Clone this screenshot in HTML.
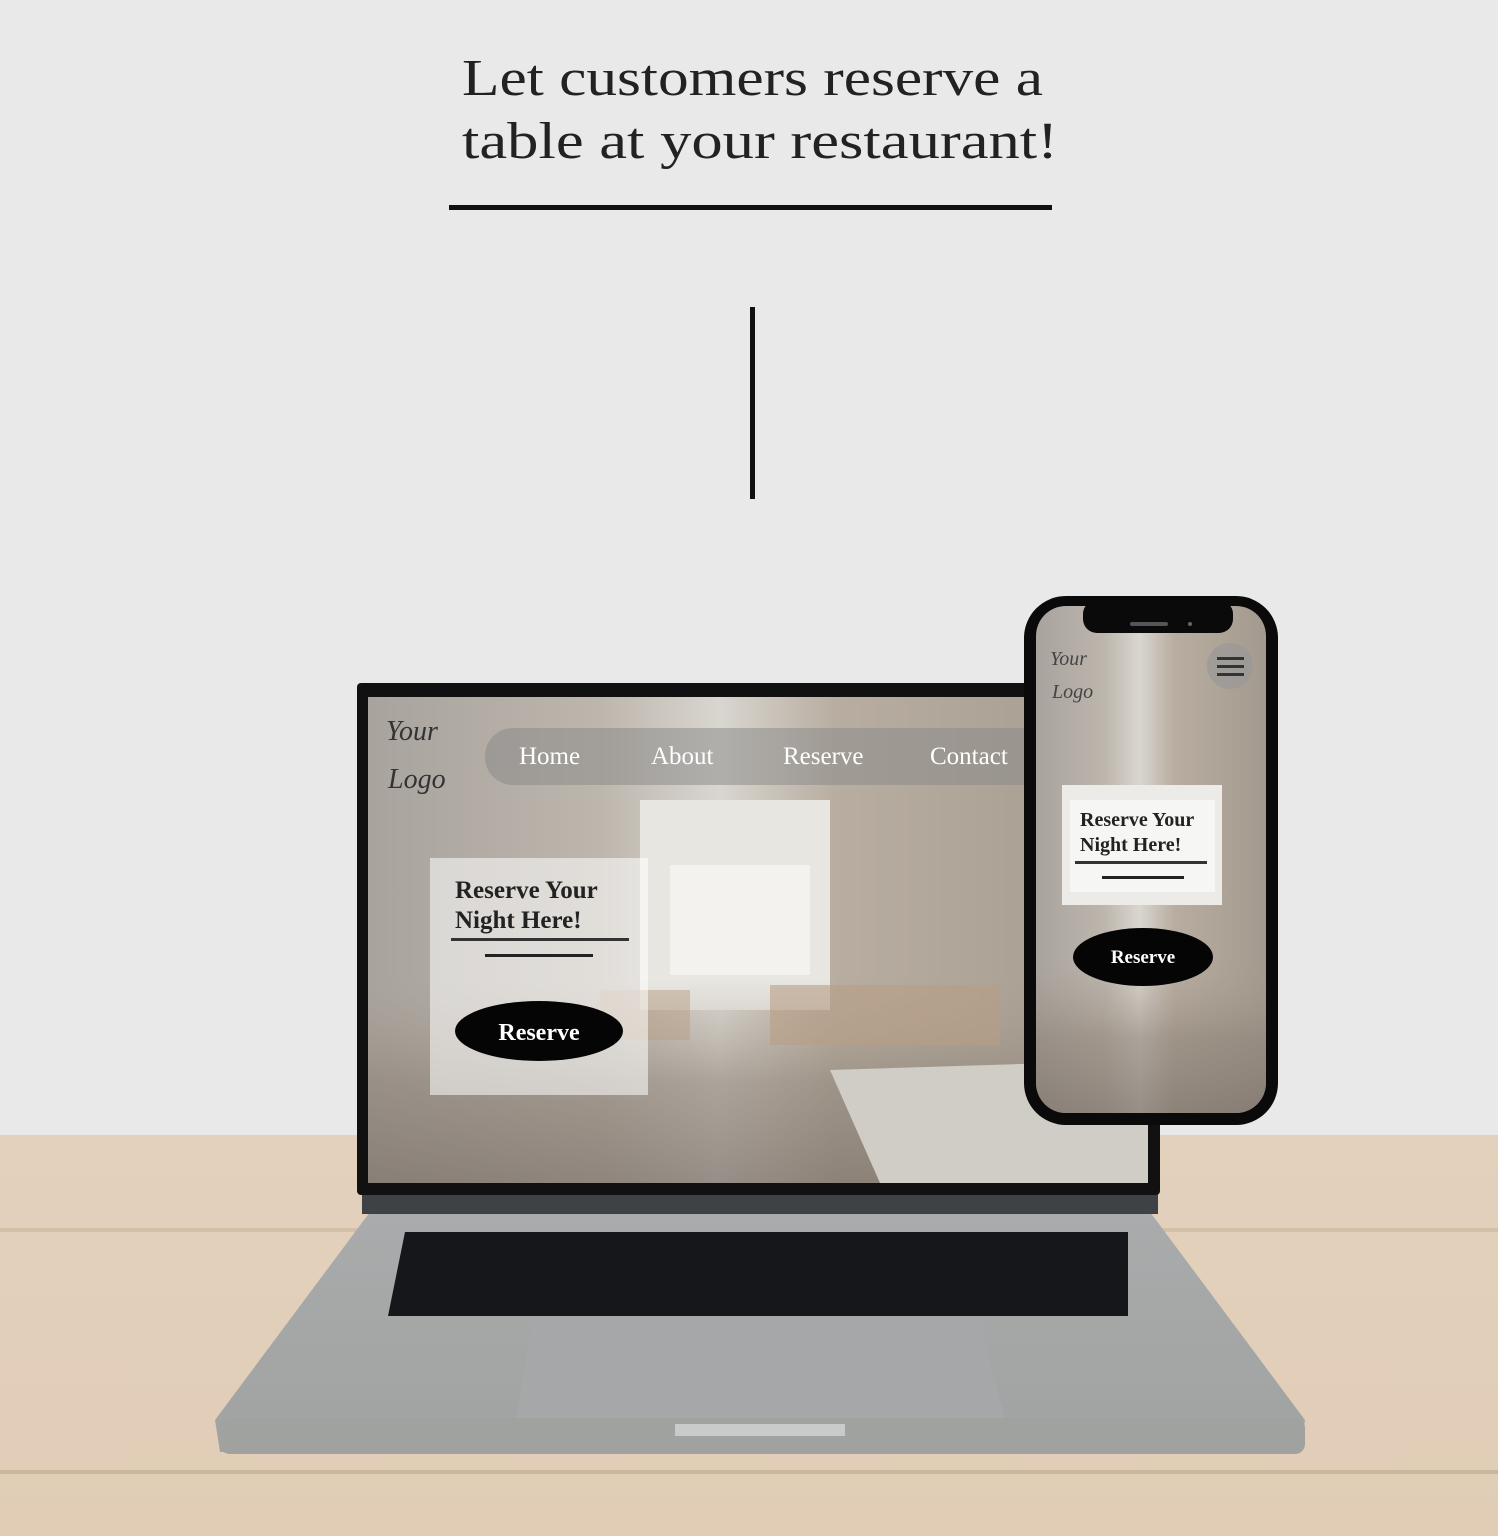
<!DOCTYPE html>
<html><head><meta charset="utf-8"><style>
html,body{margin:0;padding:0;width:1498px;height:1536px;overflow:hidden;background:#e9e9e9}
svg{display:block}
</style></head><body>
<svg width="1498" height="1536" viewBox="0 0 1498 1536" xmlns="http://www.w3.org/2000/svg">
<defs>
<linearGradient id="wood" x1="0" y1="0" x2="0" y2="1">
<stop offset="0" stop-color="#e3d1bd"/><stop offset="1" stop-color="#e1cdb6"/></linearGradient>
<linearGradient id="room" x1="0" y1="0" x2="1" y2="0">
<stop offset="0" stop-color="#a8a39d"/><stop offset="0.3" stop-color="#bdb6ad"/><stop offset="0.45" stop-color="#d9d6d0"/><stop offset="0.6" stop-color="#b8ada0"/><stop offset="1" stop-color="#a39a8f"/></linearGradient>
<linearGradient id="floor" x1="0" y1="0" x2="0" y2="1">
<stop offset="0" stop-color="#a89c8e" stop-opacity="0"/><stop offset="0.5" stop-color="#8e8378" stop-opacity="0.6"/><stop offset="1" stop-color="#7a7068" stop-opacity="0.7"/></linearGradient>
<linearGradient id="base" x1="0" y1="0" x2="0" y2="1">
<stop offset="0" stop-color="#a9abac"/><stop offset="1" stop-color="#a0a3a1"/></linearGradient>
<clipPath id="scr"><rect x="368" y="697" width="780" height="486"/></clipPath>
<clipPath id="pscr"><rect x="1036" y="606" width="230" height="507" rx="30"/></clipPath>
</defs>
<rect width="1498" height="1536" fill="#e9e9e9"/>
<rect y="1135" width="1498" height="401" fill="url(#wood)"/>
<rect y="1228" width="1498" height="4" fill="#d4c0a8"/>
<rect y="1470" width="1498" height="4" fill="#ccb59b"/>

<text x="462" y="95" font-family="Liberation Serif, serif" font-size="52" fill="#222" textLength="581" lengthAdjust="spacingAndGlyphs">Let customers reserve a</text>
<text x="462" y="158" font-family="Liberation Serif, serif" font-size="52" fill="#222" textLength="596" lengthAdjust="spacingAndGlyphs">table at your restaurant!</text>
<rect x="449" y="205" width="603" height="5" fill="#111"/>
<rect x="750" y="307" width="5" height="192" fill="#111"/>

<polygon points="370,1212 1150,1212 1305,1420 1300,1452 220,1452 215,1420" fill="url(#base)"/>
<rect x="220" y="1418" width="1085" height="36" rx="10" fill="#9fa29e"/>
<rect x="675" y="1424" width="170" height="12" fill="#c8cbc9"/>
<polygon points="405,1232 1128,1232 1128,1316 388,1316" fill="#16171b"/>
<polygon points="532,1322 980,1322 1005,1418 516,1418" fill="#a5a7a9"/>
<rect x="362" y="1190" width="796" height="24" fill="#3e4146"/>
<rect x="357" y="683" width="803" height="512" rx="4" fill="#111"/>
<g clip-path="url(#scr)">
<rect x="368" y="697" width="780" height="486" fill="url(#room)"/>
<rect x="640" y="800" width="190" height="210" fill="#e8e6e1"/>
<rect x="670" y="865" width="140" height="110" fill="#f3f2ef"/>
<rect x="368" y="980" width="780" height="203" fill="url(#floor)"/>
<rect x="770" y="985" width="230" height="60" fill="#b89f86" fill-opacity="0.6"/>
<rect x="600" y="990" width="90" height="50" fill="#b89f86" fill-opacity="0.5"/>
<polygon points="830,1070 1148,1060 1148,1183 880,1183" fill="#d0ccc6"/>
<rect x="430" y="858" width="218" height="237" fill="#fff" fill-opacity="0.55"/>
<text x="455" y="898" font-family="Liberation Serif, serif" font-weight="bold" font-size="25" fill="#222">Reserve Your</text>
<text x="455" y="928" font-family="Liberation Serif, serif" font-weight="bold" font-size="25" fill="#222">Night Here!</text>
<rect x="451" y="938" width="178" height="3" fill="#333"/>
<rect x="485" y="954" width="108" height="3" fill="#222"/>
<ellipse cx="539" cy="1031" rx="84" ry="30" fill="#050505"/>
<text x="539" y="1040" text-anchor="middle" font-family="Liberation Serif, serif" font-weight="bold" font-size="24" fill="#fff">Reserve</text>
<rect x="485" y="728" width="620" height="57" rx="28" fill="#888" fill-opacity="0.5"/>
<g font-family="Liberation Serif, serif" font-size="25" fill="#fff">
<text x="519" y="764">Home</text><text x="651" y="764">About</text><text x="783" y="764">Reserve</text><text x="930" y="764">Contact</text></g>
<text x="386" y="740" font-family="Liberation Serif, serif" font-style="italic" font-size="28" fill="#333">Your</text>
<text x="388" y="788" font-family="Liberation Serif, serif" font-style="italic" font-size="28" fill="#333">Logo</text>
</g>
<rect x="1024" y="596" width="254" height="529" rx="42" fill="#0a0a0a"/>
<g clip-path="url(#pscr)">
<rect x="1036" y="606" width="230" height="507" fill="url(#room)"/>
<rect x="1062" y="785" width="160" height="120" fill="#ecebe8"/>
<rect x="1036" y="960" width="230" height="153" fill="url(#floor)"/>
<rect x="1070" y="800" width="145" height="92" fill="#fff" fill-opacity="0.55"/>
<text x="1080" y="826" font-family="Liberation Serif, serif" font-weight="bold" font-size="20" fill="#222">Reserve Your</text>
<text x="1080" y="851" font-family="Liberation Serif, serif" font-weight="bold" font-size="20" fill="#222">Night Here!</text>
<rect x="1075" y="861" width="132" height="3" fill="#333"/>
<rect x="1102" y="876" width="82" height="3" fill="#222"/>
<ellipse cx="1143" cy="957" rx="70" ry="29" fill="#050505"/>
<text x="1143" y="963" text-anchor="middle" font-family="Liberation Serif, serif" font-weight="bold" font-size="19" fill="#fff">Reserve</text>
<text x="1050" y="665" font-family="Liberation Serif, serif" font-style="italic" font-size="20" fill="#444">Your</text>
<text x="1052" y="698" font-family="Liberation Serif, serif" font-style="italic" font-size="20" fill="#444">Logo</text>
<circle cx="1230" cy="666" r="23" fill="#999" fill-opacity="0.7"/>
<rect x="1217" y="657" width="27" height="3" fill="#333"/><rect x="1217" y="665" width="27" height="3" fill="#333"/><rect x="1217" y="673" width="27" height="3" fill="#333"/>
</g>
<rect x="1083" y="600" width="150" height="33" rx="14" fill="#0a0a0a"/>
<rect x="1130" y="622" width="38" height="4" rx="2" fill="#555"/>
<circle cx="1190" cy="624" r="2" fill="#666"/>
</svg>
</body></html>
